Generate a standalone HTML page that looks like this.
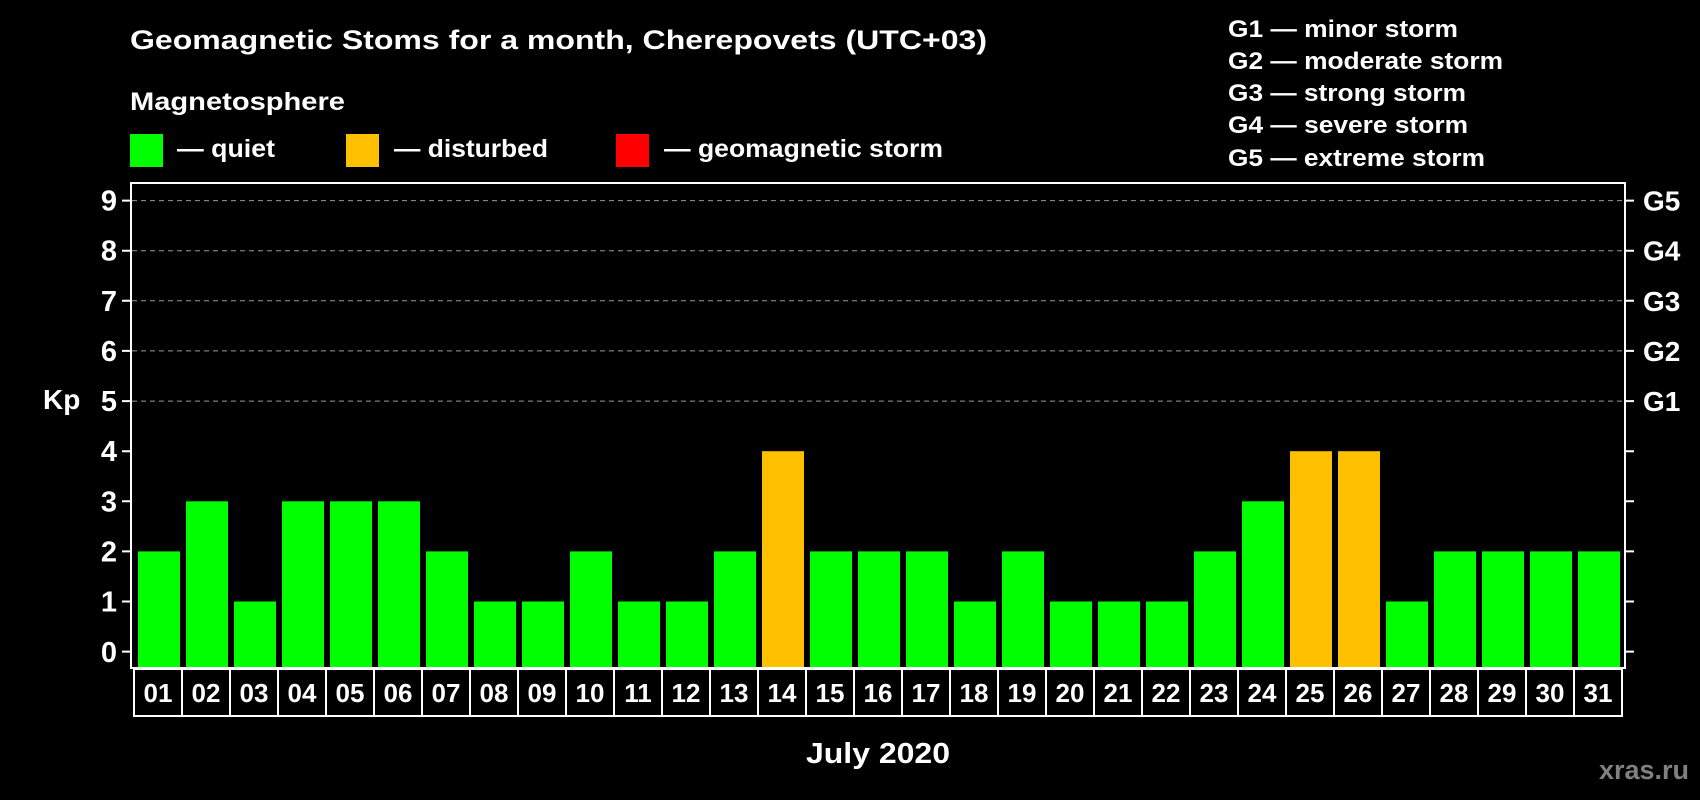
<!DOCTYPE html>
<html><head><meta charset="utf-8"><style>html,body{margin:0;padding:0;background:#000}svg{display:block}</style></head><body>
<svg width="1700" height="800" viewBox="0 0 1700 800" font-family="Liberation Sans, Arial, sans-serif" font-weight="bold" fill="#fff">
<rect width="1700" height="800" fill="#000"/>
<text x="130" y="49" font-size="27" textLength="857" lengthAdjust="spacingAndGlyphs">Geomagnetic Stoms for a month, Cherepovets (UTC+03)</text>
<text x="130" y="110" font-size="25" textLength="215" lengthAdjust="spacingAndGlyphs">Magnetosphere</text>
<rect x="130" y="134" width="33" height="33" fill="#00ff00"/>
<text x="177" y="157" font-size="25" textLength="98" lengthAdjust="spacingAndGlyphs">— quiet</text>
<rect x="346" y="134" width="33" height="33" fill="#ffc000"/>
<text x="394" y="157" font-size="25" textLength="154" lengthAdjust="spacingAndGlyphs">— disturbed</text>
<rect x="616" y="134" width="33" height="33" fill="#ff0000"/>
<text x="664" y="157" font-size="25" textLength="279" lengthAdjust="spacingAndGlyphs">— geomagnetic storm</text>
<g font-size="24">
<text x="1228" y="37" textLength="230" lengthAdjust="spacingAndGlyphs">G1 — minor storm</text>
<text x="1228" y="69" textLength="275" lengthAdjust="spacingAndGlyphs">G2 — moderate storm</text>
<text x="1228" y="101" textLength="238" lengthAdjust="spacingAndGlyphs">G3 — strong storm</text>
<text x="1228" y="133" textLength="240" lengthAdjust="spacingAndGlyphs">G4 — severe storm</text>
<text x="1228" y="166" textLength="257" lengthAdjust="spacingAndGlyphs">G5 — extreme storm</text>
</g>
<g stroke="#999" stroke-width="1" stroke-dasharray="5,4">
<line x1="132" y1="200.6" x2="1624" y2="200.6"/><line x1="132" y1="250.7" x2="1624" y2="250.7"/><line x1="132" y1="300.8" x2="1624" y2="300.8"/><line x1="132" y1="350.9" x2="1624" y2="350.9"/><line x1="132" y1="401.1" x2="1624" y2="401.1"/>
</g>
<g fill="#00ff00">
<rect x="138" y="551.4" width="42" height="116.6"/>
<rect x="186" y="501.3" width="42" height="166.7"/>
<rect x="234" y="601.5" width="42" height="66.5"/>
<rect x="282" y="501.3" width="42" height="166.7"/>
<rect x="330" y="501.3" width="42" height="166.7"/>
<rect x="378" y="501.3" width="42" height="166.7"/>
<rect x="426" y="551.4" width="42" height="116.6"/>
<rect x="474" y="601.5" width="42" height="66.5"/>
<rect x="522" y="601.5" width="42" height="66.5"/>
<rect x="570" y="551.4" width="42" height="116.6"/>
<rect x="618" y="601.5" width="42" height="66.5"/>
<rect x="666" y="601.5" width="42" height="66.5"/>
<rect x="714" y="551.4" width="42" height="116.6"/>
<rect x="762" y="451.2" width="42" height="216.8" fill="#ffc000"/>
<rect x="810" y="551.4" width="42" height="116.6"/>
<rect x="858" y="551.4" width="42" height="116.6"/>
<rect x="906" y="551.4" width="42" height="116.6"/>
<rect x="954" y="601.5" width="42" height="66.5"/>
<rect x="1002" y="551.4" width="42" height="116.6"/>
<rect x="1050" y="601.5" width="42" height="66.5"/>
<rect x="1098" y="601.5" width="42" height="66.5"/>
<rect x="1146" y="601.5" width="42" height="66.5"/>
<rect x="1194" y="551.4" width="42" height="116.6"/>
<rect x="1242" y="501.3" width="42" height="166.7"/>
<rect x="1290" y="451.2" width="42" height="216.8" fill="#ffc000"/>
<rect x="1338" y="451.2" width="42" height="216.8" fill="#ffc000"/>
<rect x="1386" y="601.5" width="42" height="66.5"/>
<rect x="1434" y="551.4" width="42" height="116.6"/>
<rect x="1482" y="551.4" width="42" height="116.6"/>
<rect x="1530" y="551.4" width="42" height="116.6"/>
<rect x="1578" y="551.4" width="42" height="116.6"/>
</g>
<rect x="131" y="183" width="1494" height="485" fill="none" stroke="#fff" stroke-width="2"/>
<g stroke="#fff" stroke-width="2">
<path d="M122 651.6H131M122 601.5H131M122 551.4H131M122 501.3H131M122 451.2H131M122 401.1H131M122 350.9H131M122 300.8H131M122 250.7H131M122 200.6H131"/>
<path d="M1625 651.6H1634M1625 601.5H1634M1625 551.4H1634M1625 501.3H1634M1625 451.2H1634M1625 401.1H1634M1625 350.9H1634M1625 300.8H1634M1625 250.7H1634M1625 200.6H1634"/>
</g>
<g font-size="29" text-anchor="end">
<text x="117" y="662">0</text><text x="117" y="611.5">1</text><text x="117" y="561.4">2</text><text x="117" y="511.3">3</text><text x="117" y="461.2">4</text><text x="117" y="411.1">5</text><text x="117" y="361">6</text><text x="117" y="310.8">7</text><text x="117" y="260.7">8</text><text x="117" y="210.6">9</text>
</g>
<g font-size="28">
<text x="1643" y="210.6">G5</text><text x="1643" y="260.7">G4</text><text x="1643" y="310.8">G3</text><text x="1643" y="361">G2</text><text x="1643" y="411.1">G1</text>
</g>
<text x="43" y="409" font-size="28">Kp</text>
<rect x="134" y="669" width="1488" height="47" fill="none" stroke="#fff" stroke-width="2"/>
<path stroke="#fff" stroke-width="2" d="M182 669V716M230 669V716M278 669V716M326 669V716M374 669V716M422 669V716M470 669V716M518 669V716M566 669V716M614 669V716M662 669V716M710 669V716M758 669V716M806 669V716M854 669V716M902 669V716M950 669V716M998 669V716M1046 669V716M1094 669V716M1142 669V716M1190 669V716M1238 669V716M1286 669V716M1334 669V716M1382 669V716M1430 669V716M1478 669V716M1526 669V716M1574 669V716"/>
<g font-size="26" text-anchor="middle">
<text x="158" y="702">01</text><text x="206" y="702">02</text><text x="254" y="702">03</text><text x="302" y="702">04</text><text x="350" y="702">05</text><text x="398" y="702">06</text><text x="446" y="702">07</text><text x="494" y="702">08</text><text x="542" y="702">09</text><text x="590" y="702">10</text><text x="638" y="702">11</text><text x="686" y="702">12</text><text x="734" y="702">13</text><text x="782" y="702">14</text><text x="830" y="702">15</text><text x="878" y="702">16</text><text x="926" y="702">17</text><text x="974" y="702">18</text><text x="1022" y="702">19</text><text x="1070" y="702">20</text><text x="1118" y="702">21</text><text x="1166" y="702">22</text><text x="1214" y="702">23</text><text x="1262" y="702">24</text><text x="1310" y="702">25</text><text x="1358" y="702">26</text><text x="1406" y="702">27</text><text x="1454" y="702">28</text><text x="1502" y="702">29</text><text x="1550" y="702">30</text><text x="1598" y="702">31</text>
</g>
<text x="878" y="763" font-size="29" text-anchor="middle" textLength="144" lengthAdjust="spacingAndGlyphs">July 2020</text>
<text x="1689" y="779" font-size="27" text-anchor="end" fill="#808080">xras.ru</text>
</svg>
</body></html>
